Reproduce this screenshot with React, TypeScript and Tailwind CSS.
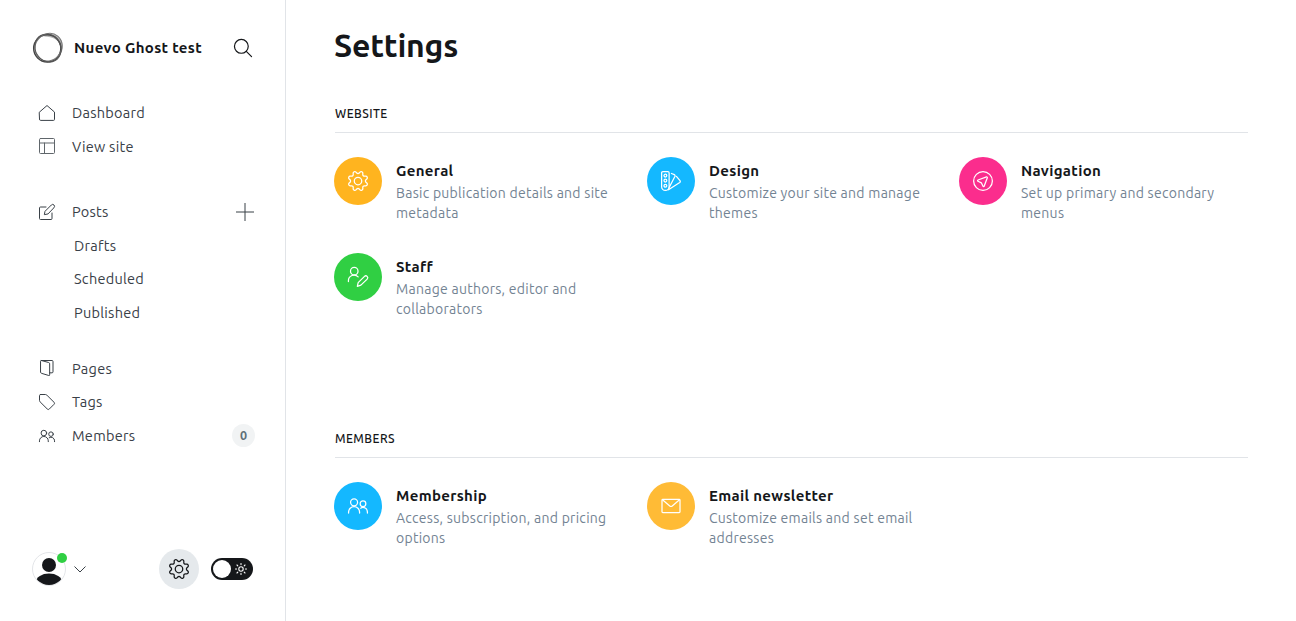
import type { ReactNode } from "react";

const GEAR =
  "M10.546 2.438a1.957 1.957 0 0 0 2.908 0L14.4 1.4a1.959 1.959 0 0 1 3.41 1.413l-.071 1.4a1.958 1.958 0 0 0 2.051 2.054l1.4-.071a1.959 1.959 0 0 1 1.41 3.41l-1.042.94a1.96 1.96 0 0 0 0 2.909l1.042.94a1.959 1.959 0 0 1-1.413 3.41l-1.4-.071a1.958 1.958 0 0 0-2.056 2.056l.071 1.4A1.959 1.959 0 0 1 14.4 22.6l-.941-1.041a1.959 1.959 0 0 0-2.908 0L9.606 22.6A1.959 1.959 0 0 1 6.2 21.192l.072-1.4a1.958 1.958 0 0 0-2.056-2.056l-1.4.071A1.958 1.958 0 0 1 1.4 14.4l1.041-.94a1.96 1.96 0 0 0 0-2.909L1.4 9.606A1.958 1.958 0 0 1 2.809 6.2l1.4.071a1.958 1.958 0 0 0 2.058-2.06L6.2 2.81A1.959 1.959 0 0 1 9.606 1.4z";

type IconProps = { children: ReactNode; className?: string; weight?: number };

function Icon({ children, className = "size-4", weight = 1.5 }: IconProps) {
  return (
    <svg
      viewBox="0 0 24 24"
      className={`shrink-0 overflow-visible ${className}`}
      fill="none"
      stroke="currentColor"
      strokeWidth={weight}
      strokeLinecap="round"
      strokeLinejoin="round"
    >
      {children}
    </svg>
  );
}

const gear = (
  <>
    <path d={GEAR} />
    <circle cx="12" cy="12" r="4.5" />
  </>
);

const people = (
  <>
    <circle cx="7.3" cy="7.6" r="4.2" />
    <path d="M.7 20.5v-1.2a6.6 6.6 0 0 1 13.2 0v1.2" />
    <circle cx="18" cy="9.2" r="3.4" />
    <path d="M15.2 14.6a5.3 5.3 0 0 1 8.1 4.6v1.3" />
  </>
);

type NavItem = { label: string; icon: ReactNode; iconClass?: string; extra?: ReactNode };

function NavRow({ label, icon, iconClass = "size-4", extra }: NavItem) {
  return (
    <a className="flex h-[33.5px] items-center pr-[30px] pl-[39px]">
      <Icon className={iconClass}>{icon}</Icon>
      <span className="ml-[17px] flex-1">{label}</span>
      {extra}
    </a>
  );
}

function SubRow({ label }: { label: string }) {
  return <a className="flex h-[33.5px] items-center pl-[74px]">{label}</a>;
}

type CardProps = { title: string; lines: string[]; color: string; icon: ReactNode };

function Card({ title, lines, color, icon }: CardProps) {
  return (
    <a className="flex h-24">
      <span className={`flex size-12 shrink-0 items-center justify-center rounded-full text-white ${color}`}>
        <Icon className="size-5" weight={1.5}>{icon}</Icon>
      </span>
      <span className="ml-3.5 pt-1 whitespace-nowrap">
        <b className="block text-[15px] leading-5 font-bold tracking-[0.33px] text-[#15171a]">{title}</b>
        <span className="mt-0.5 block text-sm leading-5 tracking-[0.27px] text-[#738393]">
          {lines.map((text) => (
            <span key={text} className="block">{text}</span>
          ))}
        </span>
      </span>
    </a>
  );
}

function SectionTitle({ children }: { children: ReactNode }) {
  return (
    <h2 className="ml-px h-[31px] border-b border-[#e1e4e8] text-xs leading-[23px] font-medium tracking-[0.45px] text-[#15171a]">
      {children}
    </h2>
  );
}

export default function App() {
  return (
    <div className="flex h-[621px] w-[1296px] overflow-hidden bg-white font-['Ubuntu','Noto_Sans',sans-serif] text-[#15171a]">
      <aside className="flex w-[286px] shrink-0 flex-col border-r border-[#e1e4e8] text-[14.5px] tracking-[0.27px] text-[#394047]">
        <header className="flex h-24 items-center pr-[33px] pl-8 text-[#15171a]">
          <svg viewBox="0 0 32 32" className="size-8 shrink-0" fill="none">
            <path
              d="M17 1.800C24 1.500 29.800 6 30.800 12c.8 6-1.800 11-6.300 15 2.500-4 4.300-8 3.300-13.500C26.500 7.500 21.500 5 12 4.500 13.500 3 15 2 17 1.800z"
              fill="#b5b5b5"
            />
            <circle cx="15.300" cy="16.300" r="13.600" stroke="#444" strokeWidth="1.500" />
            <ellipse cx="16.500" cy="15.200" rx="14.400" ry="13" stroke="#777" strokeWidth="1" transform="rotate(-50 16.500 15.200)" />
            <ellipse cx="16" cy="16" rx="14.400" ry="12.700" stroke="#555" strokeWidth="1" transform="rotate(60 16 16)" />
          </svg>
          <span className="ml-2.5 flex-1 text-[15px] font-bold tracking-[0.33px]">Nuevo Ghost test</span>
          <Icon className="size-[18px]" weight={1.6}>
            <circle cx="9.800" cy="9.800" r="9.200" />
            <path d="m16.400 16.400 7 7" />
          </Icon>
        </header>

        <nav className="flex flex-col pt-[0.4px]">
          <NavRow
            label="Dashboard"
            icon={<path d="M.75 10.600 12 .8l11.250 9.800v11a1.500 1.500 0 0 1-1.500 1.500H2.250a1.500 1.500 0 0 1-1.500-1.500z" />}
          />
          <NavRow
            label="View site"
            iconClass="mb-px size-4 opacity-80"
            icon={
              <>
                <rect x=".75" y=".75" width="22.500" height="22.500" rx="1.500" />
                <path d="M.75 7.500h22.500M8.250 7.500v15.750" />
              </>
            }
          />
          <div className="h-8" />
          <NavRow
            label="Posts"
            icon={
              <>
                <path d="M19.500 13.500v8.250a1.500 1.500 0 0 1-1.500 1.500H2.250a1.500 1.500 0 0 1-1.500-1.500V6a1.500 1.500 0 0 1 1.500-1.500h8.250" />
                <path d="m13 15-5 1 1-5L18.500 1.500a2.700 2.700 0 0 1 4 4z" />
              </>
            }
            extra={
              <svg viewBox="0 0 18 18" className="mr-px size-[18px]" stroke="#394047" strokeWidth="1">
                <path d="M9 0v18M0 9h18" />
              </svg>
            }
          />
          <SubRow label="Drafts" />
          <SubRow label="Scheduled" />
          <SubRow label="Published" />
          <div className="h-[22.5px]" />
          <NavRow
            label="Pages"
            iconClass="mb-0.5 size-4"
            icon={
              <>
                <path d="M3.500.75h16a1.500 1.500 0 0 1 1.500 1.500v15.500a1.500 1.500 0 0 1-1.500 1.500h-3.500" />
                <path d="m3.500.75 11 3a2 2 0 0 1 1.500 1.900v16.600a1 1 0 0 1-1.300 1l-11-3.300a2 2 0 0 1-1.400-1.900V1.900A1.100 1.100 0 0 1 3.500.75z" />
              </>
            }
          />
          <NavRow
            label="Tags"
            icon={<path d="M2.250.75h7.400a3 3 0 0 1 2.100.9l10.700 10.700a2.200 2.200 0 0 1 0 3.200l-6.900 6.900a2.200 2.200 0 0 1-3.200 0L1.650 11.800a3 3 0 0 1-.9-2.100V2.250a1.500 1.500 0 0 1 1.500-1.500z" />}
          />
          <NavRow
            label="Members"
            icon={people}
            extra={
              <span className="flex size-[23px] items-center justify-center rounded-full bg-[#f1f3f4] text-[12.5px] font-bold tracking-normal text-[#5d6f78]">
                0
              </span>
            }
          />
        </nav>

        <footer className="mt-auto mb-8 flex h-10 items-center pr-8 pl-8">
          <div className="relative size-[34px]">
            <svg viewBox="0 0 34 34" className="size-[34px]">
              <clipPath id="avatar">
                <circle cx="17" cy="17" r="16" />
              </clipPath>
              <circle cx="17" cy="17" r="16.500" fill="#fff" stroke="#e3e5e8" />
              <circle cx="17" cy="13" r="7" fill="#15171a" />
              <ellipse cx="17" cy="30" rx="13" ry="8.500" fill="#15171a" clipPath="url(#avatar)" />
            </svg>
            <span className="absolute top-[1px] left-[25px] size-2.5 rounded-full bg-[#30cf43]" />
          </div>
          <svg viewBox="0 0 12 7" className="ml-2 h-[7px] w-3" fill="none" stroke="#394047">
            <path d="m.5.500 5.500 5.500L11.500.500" />
          </svg>
          <span className="ml-auto flex size-10 items-center justify-center rounded-full bg-[#e5e9ec] text-[#15171a]">
            <Icon className="size-5">{gear}</Icon>
          </span>
          <span className="ml-3 flex h-[22px] w-[42px] items-center justify-between rounded-full bg-[#15171a] pr-1.5 pl-0.5">
            <span className="size-[18px] rounded-full bg-white" />
            <svg viewBox="0 0 12 12" className="size-3" fill="none" stroke="#fff" strokeWidth="1.100" strokeLinecap="round">
              <circle cx="6" cy="6" r="2.200" />
              <path d="M6 .5v1.100M6 10.400v1.100M.5 6h1.100M10.400 6h1.100M2 2l.8.800M9.200 9.200l.8.800M2 10l.8-.8M9.200 2.800l.8-.8" />
            </svg>
          </span>
        </footer>
      </aside>

      <main className="flex-1 pr-12 pl-12">
        <h1 className="h-[102px] pt-[25px] text-[32px] leading-10 font-bold tracking-[-0.2px]">Settings</h1>
        <SectionTitle>WEBSITE</SectionTitle>
        <div className="mt-6 grid h-[269px] grid-cols-[313px_312px_1fr] content-start">
          <Card title="General" color="bg-[#ffb41f]" lines={["Basic publication details and site", "metadata"]} icon={gear} />
          <Card
            title="Design"
            color="bg-[#14b8ff]"
            lines={["Customize your site and manage", "themes"]}
            icon={
              <>
                <path d="M2.250.75h6a1.500 1.500 0 0 1 1.500 1.500v16.500a4.500 4.500 0 0 1-9 0V2.250a1.500 1.500 0 0 1 1.500-1.500z" />
                <circle cx="5.250" cy="5.500" r="1.700" />
                <circle cx="5.250" cy="11.500" r="1.700" />
                <circle cx="5.250" cy="17.700" r="1.700" />
                <path d="m12.500 3 3.500 1.400a1.500 1.500 0 0 1 .8 2L9.500 20.500M18.500 6.500l4.300 5a1.500 1.500 0 0 1-.3 2.200L9 22.500" />
              </>
            }
          />
          <Card
            title="Navigation"
            color="bg-[#fb2d8d]"
            lines={["Set up primary and secondary", "menus"]}
            icon={
              <>
                <circle cx="12" cy="12" r="11.250" />
                <path d="M16.200 7.100 6 10.800a.8.8 0 0 0 0 1.500l4 1.900 2 4a.8.8 0 0 0 1.500-.1l3.700-10a.8.8 0 0 0-1-1z" />
              </>
            }
          />
          <Card
            title="Staff"
            color="bg-[#30cf43]"
            lines={["Manage authors, editor and", "collaborators"]}
            icon={
              <>
                <circle cx="7.500" cy="5" r="4.500" />
                <path d="M.5 17.500v-1a6.800 6.800 0 0 1 11.700-4.700" />
                <path d="m15.500 21.800-4.300 1.400 1-4.500 7.600-7.400a2.200 2.200 0 0 1 3.200 3.200z" />
              </>
            }
          />
        </div>
        <div className="pt-px">
          <SectionTitle>MEMBERS</SectionTitle>
        </div>
        <div className="mt-6 grid grid-cols-[313px_312px_1fr]">
          <Card title="Membership" color="bg-[#14b8ff]" lines={["Access, subscription, and pricing", "options"]} icon={people} />
          <Card
            title="Email newsletter"
            color="bg-[#ffbb36]"
            lines={["Customize emails and set email", "addresses"]}
            icon={
              <>
                <rect x="1.200" y="4" width="21.600" height="16" rx="1" />
                <path d="m1.800 4.600 8.700 7.300a2.400 2.400 0 0 0 3 0l8.700-7.300" />
              </>
            }
          />
        </div>
      </main>
    </div>
  );
}
